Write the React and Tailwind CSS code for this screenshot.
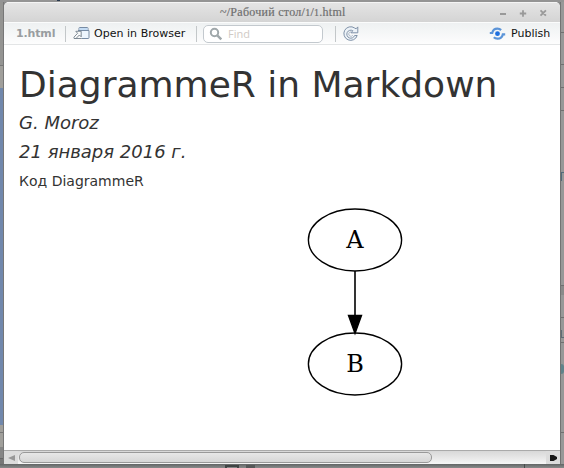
function Divider({ className = '' }) {
  return <div className={`h-4 w-px bg-[#c3c7c9] ${className}`} />;
}

function LeftEdge() {
  return (
    <div className="flex w-1 shrink-0 flex-col border-r border-[#777777] bg-[#949492]">
      <div className="h-[64px] border-b border-[#777777]" />
      <div className="h-[22px] bg-[#a09f9b]" />
      <div className="h-[337px] bg-[#7188ac]" />
      <div className="h-2 border-b border-[#777777] bg-[#a09f9b]" />
      <div className="h-[14px] bg-[#a09f9b]" />
      <div className="h-3 border-b border-[#666666] bg-[#858585]" />
      <div className="grow bg-[#777777]" />
    </div>
  );
}

function RightEdge() {
  return (
    <div className="flex w-1 shrink-0 flex-col border-l border-[#737373] bg-[#989898]">
      <div className="h-[31px] border-b border-[#707070]" />
      <div className="h-8 border-b border-[#707070]" />
      <div className="h-[23px] border-b border-[#707070]" />
      <div className="h-[23px] border-b border-[#707070]" />
      <div className="mt-[61px] h-[9px] border-l border-t border-[#526b7b]" />
      <div className="mt-[104px] h-[10px] border-t border-[#707070] bg-[#8a8a8a]" />
      <div className="mt-[22px] h-px bg-[#707070]" />
      <div className="mt-3 h-2 border-b border-l border-[#5e6c75]" />
      <div className="mt-1 h-px bg-[#707070]" />
      <div className="mt-[21px] h-2.5 rounded-r-full bg-[#60838b]" />
      <div className="mt-[58px] h-px bg-[#707070]" />
    </div>
  );
}

function TitleBar() {
  return (
    <div className="flex h-5 shrink-0 items-center border-t border-[#f4f4f4] bg-linear-to-b from-[#e4e4e4] to-[#d4d4d4]">
      <div className="w-[216px] shrink-0" />
      <span className="w-[200px] whitespace-nowrap font-['Liberation_Serif',serif] text-[12px] leading-4 tracking-[0.27px] text-[#6f6f6f] [-webkit-text-stroke:0.2px_#6f6f6f]">
        ~/Рабочий стол/<span className="text-[10px]">1</span>/<span className="text-[10px]">1</span>.html
      </span>
      <svg className="ml-[79px] h-4 w-[55px]" viewBox="0 0 55 16" fill="none" stroke="#999" strokeWidth="1.8">
        <path d="M1 9h6M20.8 8.5h6.4M24 5.3v6.4M41.5 5.3l5.4 5.4M46.9 5.3L41.5 10.7" />
      </svg>
    </div>
  );
}

function Toolbar() {
  return (
    <div className="flex h-[23px] shrink-0 items-center border-b border-t border-b-[#e3e5e6] border-t-[#fbfcfc] bg-linear-to-b from-[#eef1f2] to-[#fdfdfd] font-['DejaVu_Sans',sans-serif] text-[11px] leading-4 text-[#111]">
      <span className="ml-3 w-[42px] shrink-0 whitespace-nowrap font-bold tracking-[-0.15px] text-[#999da0]">1.html</span>
      <Divider className="ml-[7px]" />
      <svg className="ml-[7px] mt-px h-4 w-[18px] shrink-0" viewBox="0 0 18 16" fill="none">
        <path d="M6 4V2.2Q6 1.5 6.8 1.5h7.4q.8 0 .8.7V4M5 4.5h11v7.2q0 .8-.8.8H9" fill="#edf6fe" stroke="#778ca5" />
        <path d="M6.5 2h8v2h-8z" fill="#c4dcf4" />
        <path d="M2.8 5.3h5.4v5.5L6.4 9l-3.9 4L.8 11.3l3.8-4z" fill="#f9fafa" stroke="#74808b" strokeWidth=".9" />
        <path d="M.8 12.5h8" stroke="#74808b" strokeWidth=".9" />
      </svg>
      <span className="ml-[3px] mt-px w-24 shrink-0 whitespace-nowrap tracking-[0.03px]">Open in Browser</span>
      <Divider className="ml-1.5" />
      <div className="ml-1.5 flex h-[18px] w-[120px] shrink-0 items-center rounded-[5px] border border-[#c3c9ce] bg-white pl-[5px]">
        <svg className="size-[14px]" viewBox="0 0 14 14" fill="none" stroke="#a0a8ab">
          <circle cx="5.5" cy="5.5" r="3.7" strokeWidth="2" />
          <path d="M8.3 8.3l4 4" strokeWidth="2.4" />
        </svg>
        <span className="ml-[5px] font-['Open_Sans',sans-serif] text-[11px] text-[#d0cac5]">Find</span>
      </div>
      <Divider className="ml-3" />
      <svg className="ml-[7px] size-4 shrink-0" viewBox="0 0 16 16" fill="none">
        <path d="M11.6 2A6.8 6.8 0 1 0 14.2 9.5h-2.6A4 4 0 1 1 9.8 4.7L8 6.8h6.8V.9l-1.7 1.9z" fill="#edf3f8" stroke="#7f91a8" strokeLinejoin="round" />
        <path d="M9.8 9.2A2.2 2.2 0 1 1 8 5.9" stroke="#9aabc0" strokeWidth=".8" />
      </svg>
      <div className="grow" />
      <svg className="mt-px h-4 w-[17px] shrink-0" viewBox="0 0 17 16" fill="none">
        <circle cx="8.5" cy="7.7" r="2.4" fill="#1f70df" />
        <path d="M.8 7H3.2C3.9 3.8 6 2.7 8.4 2.7c1.6 0 2.8.5 3.7 1.4M16.2 8.4H13.8c-.7 3.2-2.9 4.3-5.3 4.3-1.6 0-2.8-.5-3.7-1.4" stroke="#5b94d8" strokeWidth="2.2" />
      </svg>
      <span className="ml-[5px] mr-[7px] mt-px w-[42px] shrink-0 whitespace-nowrap">Publish</span>
    </div>
  );
}

function Diagram() {
  return (
    <svg className="ml-[288px] mt-[11px] h-[200px] w-[130px]" viewBox="0 0 130 200" fill="none" stroke="black" strokeWidth="1.4">
      <ellipse cx="48" cy="38" rx="46.6" ry="31" />
      <ellipse cx="48" cy="162" rx="46.6" ry="31" />
      <path d="M48 69v46" strokeWidth="1.6" />
      <path d="M41.5 113.5h13L48 131.5z" fill="black" />
      <g fill="black" stroke="none" textAnchor="middle" className="font-['DejaVu_Serif',serif] text-[24px]">
        <text x="48" y="45.5">A</text>
        <text x="48" y="169.5">B</text>
      </g>
    </svg>
  );
}

function Scrollbar() {
  return (
    <div className="flex h-[14px] shrink-0 border-t border-[#aaaaaa] bg-linear-to-b from-[#d8d8d8] to-[#f6f6f6]">
      <div className="flex w-[14px] items-center justify-center bg-[#dcdcdc]">
        <svg className="h-2 w-[7px]" viewBox="0 0 7 8"><path d="M7 1v6L0 4z" fill="#979797" /></svg>
      </div>
      <div className="ml-px mt-px h-[11px] w-[413px] rounded-[5px] border border-[#999999] bg-linear-to-b from-[#e7e7e7] to-[#d6d6d6]" />
      <div className="grow" />
      <div className="flex w-[14px] items-center justify-center bg-[#dcdcdc]">
        <svg className="h-2 w-[7px]" viewBox="0 0 7 8"><path d="M0 1h3.5L7 3v2L3.5 7H0z" fill="#171717" /></svg>
      </div>
    </div>
  );
}

export default function App() {
  return (
    <div className="flex h-[468px] w-[564px] flex-col overflow-hidden bg-[#777b7b]">
      <div className="h-0.5 shrink-0 bg-[#949494]"><div className="ml-[57px] h-px w-[3px] bg-[#27384d]" /></div>
      <div className="flex h-[462px] shrink-0 bg-[#8c8c8c]">
        <LeftEdge />
        <div className="flex w-[556px] shrink-0 flex-col overflow-hidden rounded-t-[5px] bg-white">
          <TitleBar />
          <Toolbar />
          <main className="h-[405px] shrink-0 overflow-hidden pl-[15px] font-['DejaVu_Sans',sans-serif] text-[#333]">
            <h1 className="mt-[18px] h-11 whitespace-nowrap text-[36px] leading-[44px]">DiagrammeR in Markdown</h1>
            <p className="mt-[5px] text-[18px] italic leading-[22px]">G. Moroz</p>
            <p className="mt-[7px] text-[18px] italic leading-[22px]">21 января 2016 г.</p>
            <p className="mt-2 text-[14px] leading-5">Код DiagrammeR</p>
            <Diagram />
          </main>
          <Scrollbar />
        </div>
        <RightEdge />
      </div>
      <div className="flex h-1 shrink-0 bg-linear-to-b from-[#626565] to-[#898b8b]">
        <div className="ml-[225px] mt-px h-[3px] w-[14px] border-2 border-b-0 border-[#404444]" />
        <div className="ml-[7px] mt-px w-[9px] bg-[#555858]" />
        <div className="ml-[269px] w-px bg-[#484b4b]" />
      </div>
    </div>
  );
}
